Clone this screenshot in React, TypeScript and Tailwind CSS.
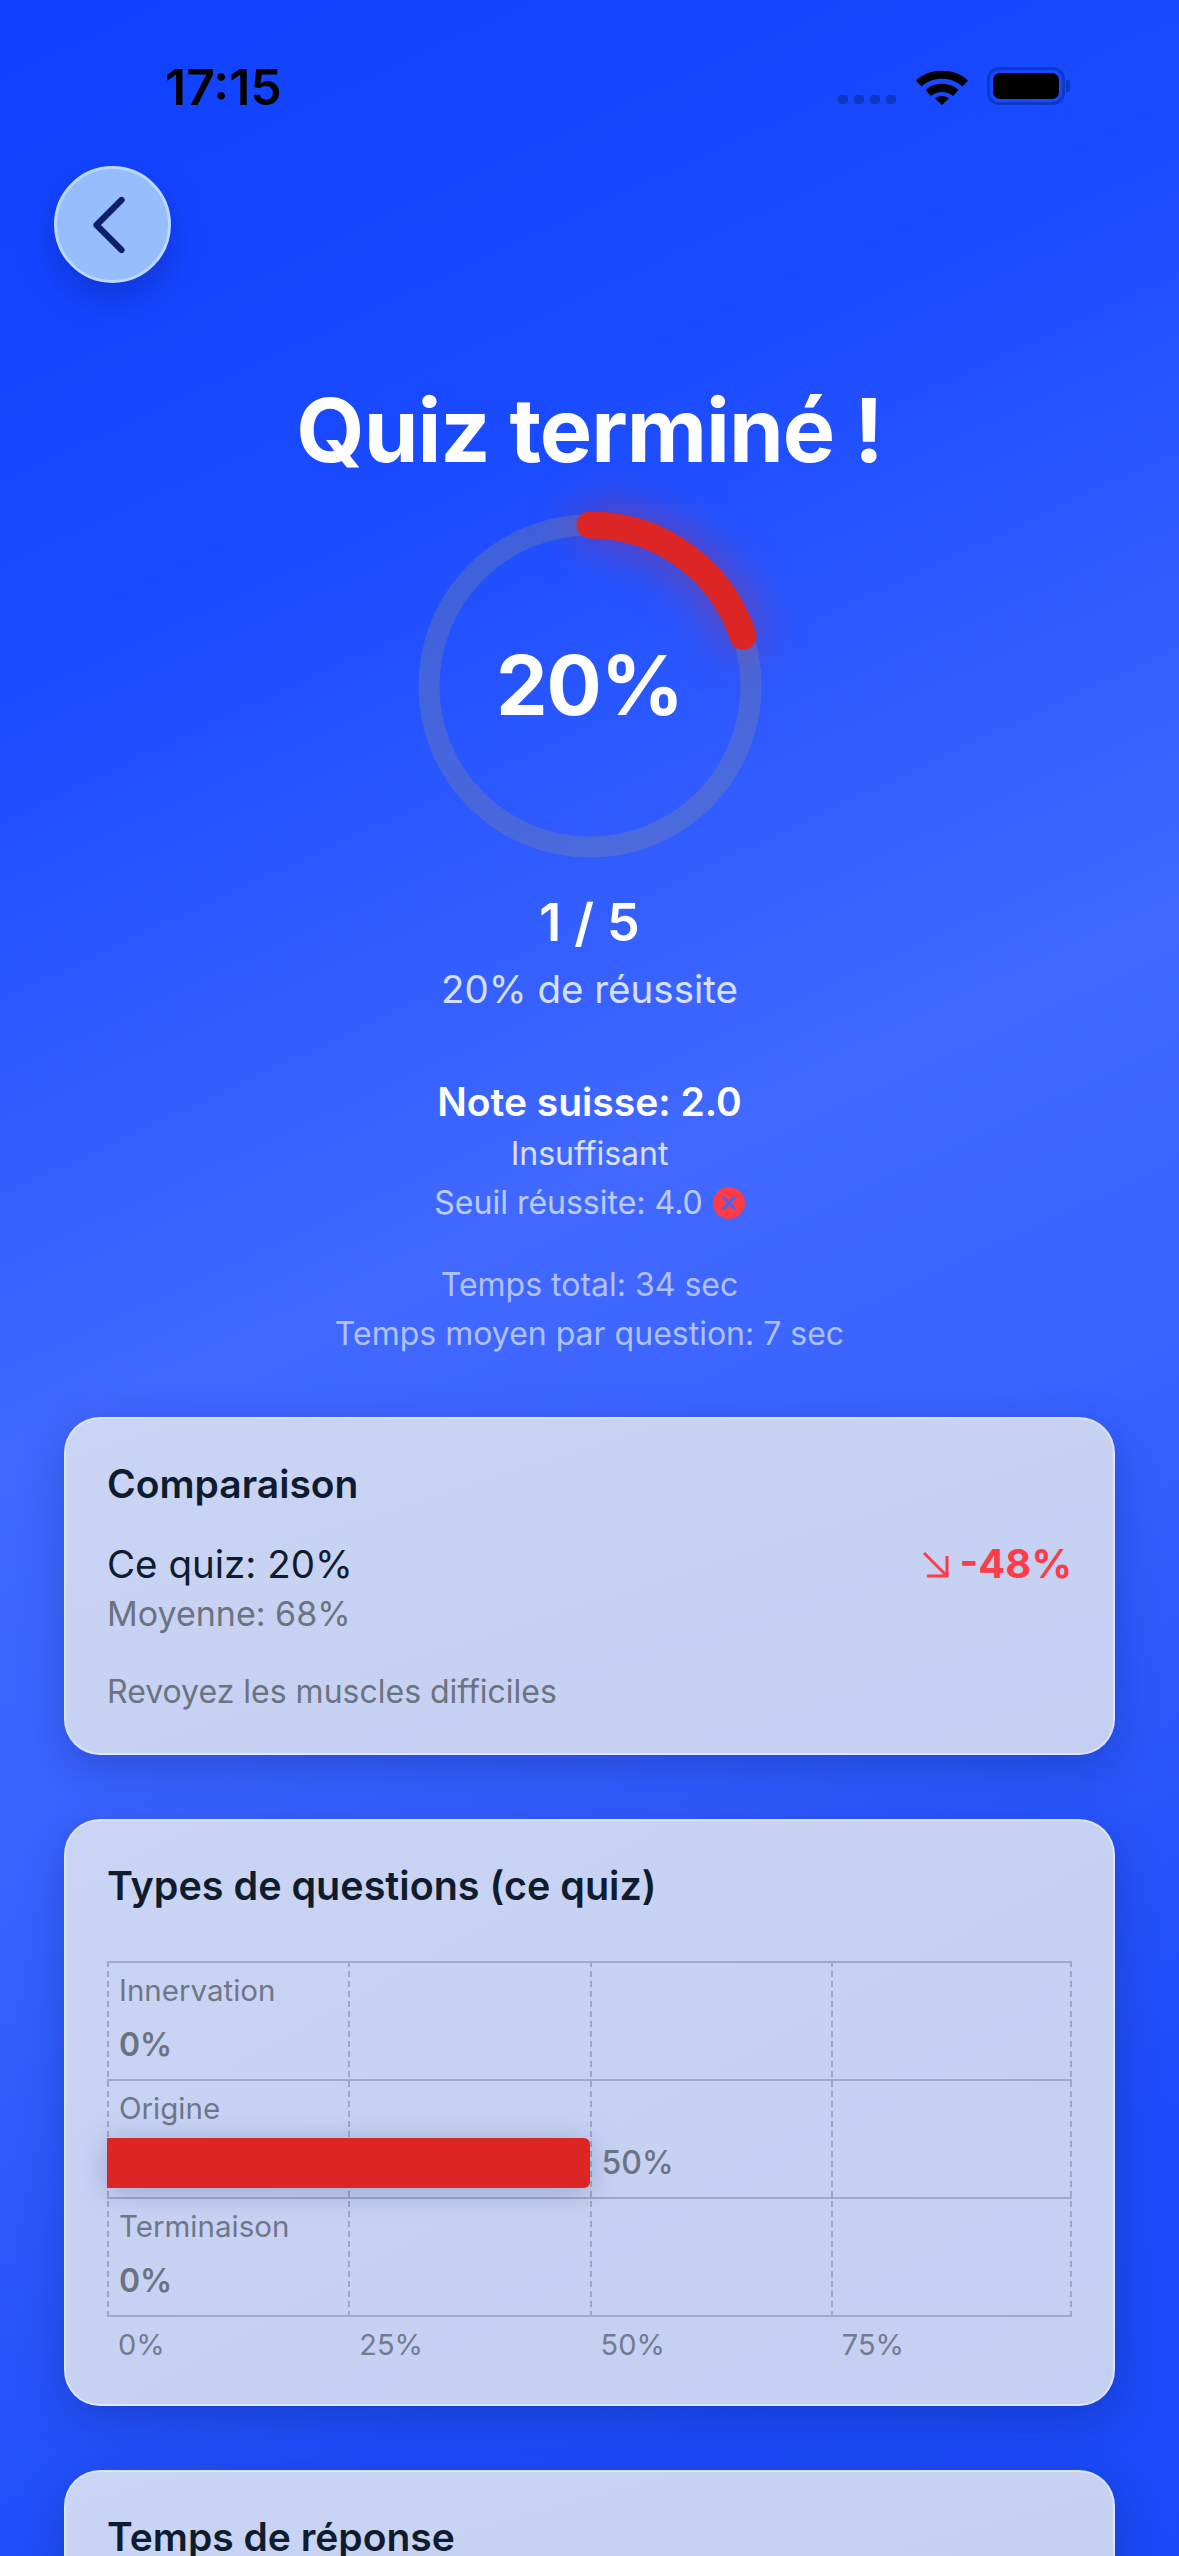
import { ChevronLeft, X } from 'lucide-react';

const FONT = 'font-[Inter,"Noto_Sans",sans-serif]';

const ROWS = [
  { label: 'Innervation', value: 0 },
  { label: 'Origine', value: 50 },
  { label: 'Terminaison', value: 0 },
];

const TICKS = ['0%', '25%', '50%', '75%'];

function StatusBar() {
  return (
    <div className="flex h-[166px] items-start">
      <span className="ml-[165px] mt-[62px] text-[50px] leading-[50px] font-semibold text-black">17:15</span>
      <div className="ml-auto mr-[109px] mt-[67px] flex items-end">
        <div className="mb-[1px] flex gap-[6px]">
          {[0, 1, 2, 3].map((i) => (
            <span key={i} className="h-[9px] w-[10px] rounded-[3px] bg-[#0d39c8]" />
          ))}
        </div>
        <svg width="54" height="38" viewBox="0 0 54 38" className="ml-[19px]">
          <path d="M1 13.5C14 0.5 40 0.5 53 13.5L47.5 19.5C37 9 17 9 6.5 19.5Z" fill="#000" />
          <path d="M10.5 23C19 14.5 35 14.5 43.5 23L38 29C32 23.5 22 23.5 16 29Z" fill="#000" />
          <path d="M20 31.5C24 28 30 28 34 31.5L27 38Z" fill="#000" />
        </svg>
        <div className="ml-[18px] flex items-center">
          <div className="flex h-[38px] w-[78px] items-center justify-center rounded-[12px] border-[3px] border-[#0d39c8]">
            <span className="h-[26px] w-[66px] rounded-[7px] bg-black" />
          </div>
          <span className="ml-[1px] h-[12px] w-[4px] rounded-r-[3px] bg-[#0d39c8]" />
        </div>
      </div>
    </div>
  );
}

function ScoreRing() {
  return (
    <div className="relative mx-auto mt-[26px] flex h-[360px] w-[360px] items-center justify-center">
      <svg width="360" height="360" viewBox="0 0 360 360" className="absolute inset-0 overflow-visible">
        <circle cx="180" cy="180" r="161" fill="none" stroke="#8a8a8a" strokeOpacity="0.3" strokeWidth="21" />
        <path
          d="M180 19 A161 161 0 0 1 333.1 130.2"
          fill="none"
          stroke="#dc2626"
          strokeWidth="27"
          strokeLinecap="round"
          className="drop-shadow-[0_0_24px_rgba(220,38,38,0.55)]"
        />
      </svg>
      <span className="relative text-[82px] leading-none font-bold tracking-[-1px] text-white">20%</span>
    </div>
  );
}

function Card({ children, className }: { children: React.ReactNode; className: string }) {
  return (
    <div className={`mx-[64px] rounded-[36px] border-2 border-white/40 bg-gradient-to-br from-[#cad5f5] to-[#c4cff1] px-[41px] pt-[42px] shadow-[0_14px_44px_rgba(10,30,130,0.32)] ${className}`}>
      {children}
    </div>
  );
}

function QuestionChart() {
  return (
    <div className="relative mt-[52px]">
      {/* gridlines behind the rows */}
      <div className="absolute top-0 left-0 grid h-[354px] w-full grid-cols-4">
        {TICKS.map((t) => (
          <div key={t} className="h-full bg-[repeating-linear-gradient(to_bottom,#9ea7c2_0_6px,transparent_6px_10px)] bg-[length:2px_100%] bg-no-repeat" />
        ))}
        <div className="absolute top-0 right-0 h-full w-[2px] bg-[repeating-linear-gradient(to_bottom,#9ea7c2_0_6px,transparent_6px_10px)]" />
      </div>

      <div className="relative border-t-2 border-[#a0a9c6]">
        {ROWS.map((r) => (
          <div key={r.label} className="h-[118px] border-b-2 border-[#a0a9c6]">
            <div className="pl-[12px] pt-[9px] text-[29.5px] leading-[36px] text-[#6f7688]">{r.label}</div>
            <div className="mt-[12px] flex h-[50px] items-center">
              {r.value > 0 && (
                <div
                  className="h-full rounded-r-[6px] bg-[#dc2626] shadow-[0_4px_30px_rgba(40,50,110,0.28)]"
                  style={{ width: `${r.value}%` }}
                />
              )}
              <span className={`pl-[12px] text-[32px] leading-none text-[#6b7280] ${r.value > 0 ? 'font-medium' : 'font-semibold'}`}>
                {r.value}%
              </span>
            </div>
          </div>
        ))}
      </div>

      <div className="mt-[9px] grid grid-cols-4">
        {TICKS.map((t) => (
          <span key={t} className="pl-[11px] text-[29px] leading-[38px] text-[#747b8e]">{t}</span>
        ))}
      </div>
    </div>
  );
}

export default function App() {
  return (
    <div className={`${FONT} h-[2556px] w-[1179px] overflow-hidden bg-[linear-gradient(155deg,#0f40ff_0%,#1a4bff_22%,#4169ff_47%,#3a63ff_60%,#1d4cf8_85%,#1a4af5_100%)]`}>
      <StatusBar />

      <button className="ml-[54px] flex h-[117px] w-[117px] items-center justify-center rounded-full border-[3px] border-[#bcd8ff] bg-[#96bdfc] shadow-[0_16px_36px_rgba(10,30,140,0.35)]">
        <ChevronLeft size={100} strokeWidth={1.5} className="-ml-[8px] shrink-0 text-[#0b1f6e]" />
      </button>

      <h1 className="mt-[97px] text-center text-[88px] leading-[100px] font-bold tracking-[-1px] text-white">Quiz terminé !</h1>

      <ScoreRing />

      <div className="text-center">
        <div className="mt-[27px] text-[52px] leading-[60px] font-semibold text-white">1 / 5</div>
        <div className="mt-[13px] text-[38.5px] leading-[46px] text-white/80">20% de réussite</div>
        <div className="mt-[67px] text-[39px] leading-[46px] font-semibold text-white">Note suisse: 2.0</div>
        <div className="mt-[9px] text-[32px] leading-[40px] text-white/80">Insuffisant</div>
        <div className="mt-[9px] flex items-center justify-center gap-[10px] text-[32px] leading-[40px] text-white/65">
          <span>Seuil réussite: 4.0</span>
          <span className="flex h-[32px] w-[32px] items-center justify-center rounded-full bg-[#ff3b47]">
            <X size={22} strokeWidth={3} className="text-[#3f67f5]" />
          </span>
        </div>
        <div className="mt-[42px] text-[32px] leading-[40px] text-white/60">Temps total: 34 sec</div>
        <div className="mt-[9px] text-[32px] leading-[40px] text-white/60">Temps moyen par question: 7 sec</div>
      </div>

      <Card className="mt-[63px] h-[338px]">
        <h2 className="text-[39px] leading-[46px] font-semibold text-[#0f1c2e]">Comparaison</h2>
        <div className="mt-[34px] flex items-start justify-between">
          <div>
            <div className="text-[38.5px] leading-[46px] text-[#0f1c2e]">Ce quiz: 20%</div>
            <div className="mt-[7px] text-[34px] leading-[40px] text-[#6b7280]">Moyenne: 68%</div>
          </div>
          <div className="flex h-[46px] items-center gap-[10px] text-[40px] font-bold text-[#ff3b47]">
            <svg width="28" height="27" viewBox="0 0 28 27" fill="none" stroke="currentColor" strokeWidth="3">
              <path d="M2 2L25 25M25 5V25H5" />
            </svg>
            <span>-48%</span>
          </div>
        </div>
        <div className="mt-[39px] text-[32px] leading-[38px] text-[#6b7280]">Revoyez les muscles difficiles</div>
      </Card>

      <Card className="mt-[64px] h-[587px]">
        <h2 className="text-[39.5px] leading-[46px] font-semibold text-[#0f1c2e]">Types de questions (ce quiz)</h2>
        <QuestionChart />
      </Card>

      <Card className="mt-[64px] h-[300px]">
        <h2 className="text-[39px] leading-[46px] font-semibold text-[#0f1c2e]">Temps de réponse</h2>
      </Card>
    </div>
  );
}
